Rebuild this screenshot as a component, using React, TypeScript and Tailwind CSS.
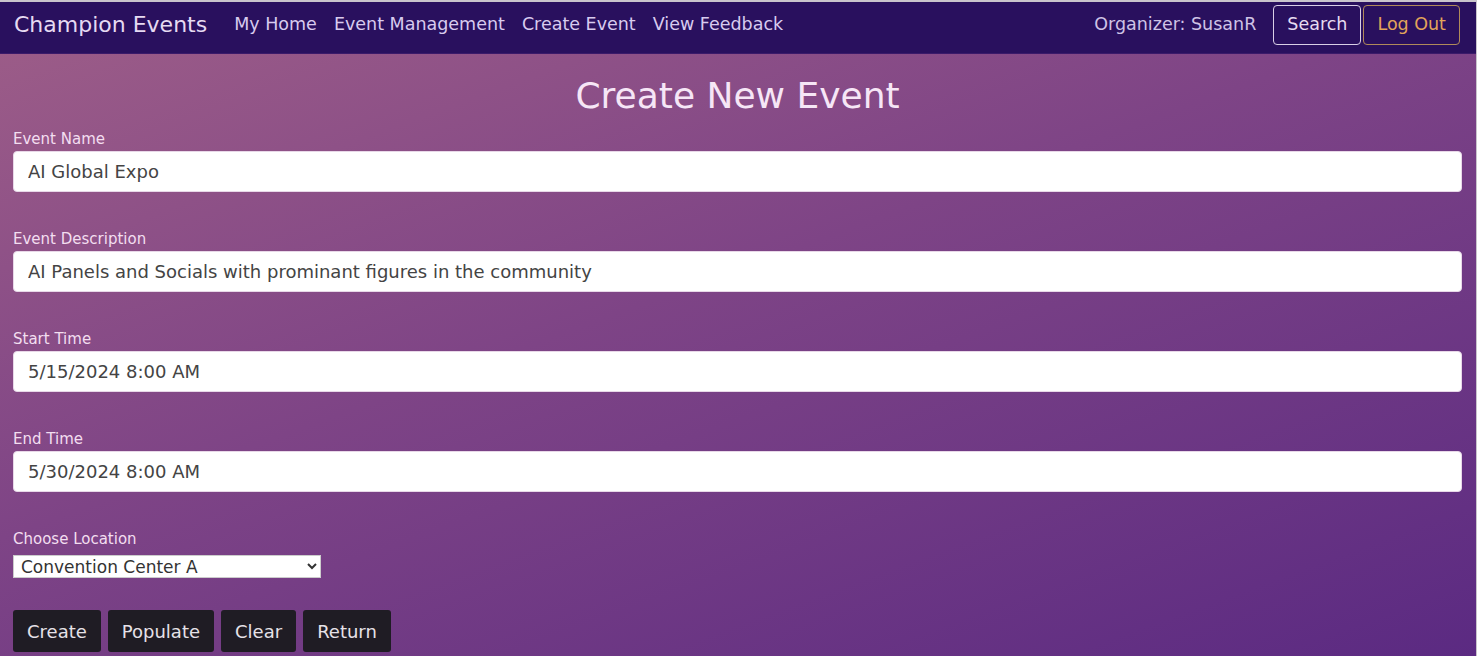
import React from "react";

const font = { fontFamily: '"DejaVu Sans", Verdana, sans-serif' };

const navLinks = ["My Home", "Event Management", "Create Event", "View Feedback"];

const fields = [
  { label: "Event Name", value: "AI Global Expo" },
  { label: "Event Description", value: "AI Panels and Socials with prominant figures in the community" },
  { label: "Start Time", value: "5/15/2024 8:00 AM" },
  { label: "End Time", value: "5/30/2024 8:00 AM" },
];

function Field({ label, value }: { label: string; value: string }) {
  return (
    <div className="h-[100px]">
      <label className="block h-[13px] text-[15px] leading-[13px] text-[#f3def0]">{label}</label>
      <input
        readOnly
        value={value}
        className="mt-[5px] h-[41px] w-full rounded-[4px] border border-[#e8d8e8] bg-white px-[14px] text-[18px] text-[#444] outline-none"
        style={font}
      />
    </div>
  );
}

export default function App() {
  return (
    <div className="h-[656px] w-[1482px] overflow-hidden bg-white" style={font}>
      <div className="h-full w-[1477px] border-t-2 border-r border-[#c9c4cc] bg-[linear-gradient(160deg,#9e5e88_0%,#7e4486_45%,#5b2a82_100%)]">
        <nav className="flex h-[52px] items-center border-b border-[#3b1a6a] bg-[#29105e] pb-[7px] pl-[14px] pr-[16px]">
          <span className="mr-[27px] text-[22px] text-[#e6daf2]">Champion Events</span>
          <div className="flex gap-[17px] text-[17.5px] text-[#d8cbef]">
            {navLinks.map((l) => (
              <a key={l} className="cursor-pointer">
                {l}
              </a>
            ))}
          </div>
          <div className="ml-auto flex items-center pt-[1px]">
            <span className="mr-[17px] text-[17.5px] text-[#cfc3e6]">Organizer: SusanR</span>
            <button className="h-[40px] rounded-[4px] border border-[#d9cfe6] px-[13px] text-[17.5px] text-[#e6dcf0]" style={font}>
              Search
            </button>
            <button className="ml-[2px] h-[40px] rounded-[4px] border border-[#b08a5a] px-[13px] text-[17.5px] text-[#e2a45a]" style={font}>
              Log Out
            </button>
          </div>
        </nav>

        <div className="px-[13px] pr-[14px]">
          <h1 className="mt-[18px] mb-[13px] text-center text-[36px] leading-[48px] text-[#f6e6f6]">Create New Event</h1>
          {fields.map((f) => (
            <Field key={f.label} {...f} />
          ))}
          <label className="block h-[13px] text-[15px] leading-[13px] text-[#f3def0]">Choose Location</label>
          <select
            className="mt-[9px] h-[23px] w-[308px] border border-[#ccc] bg-white px-[3px] text-[17px] leading-[20px] text-[#333]"
            style={font}
            defaultValue="a"
          >
            <option value="a">Convention Center A</option>
            <option value="b">Convention Center B</option>
          </select>
          <div className="mt-[30px] flex gap-[7px]">
            {["Create", "Populate", "Clear", "Return"].map((b) => (
              <button
                key={b}
                className="h-[42px] rounded-[3px] bg-[#1f1c24] px-[14px] text-[18px] text-[#e6e2e8]"
                style={font}
              >
                {b}
              </button>
            ))}
          </div>
        </div>
      </div>
    </div>
  );
}
